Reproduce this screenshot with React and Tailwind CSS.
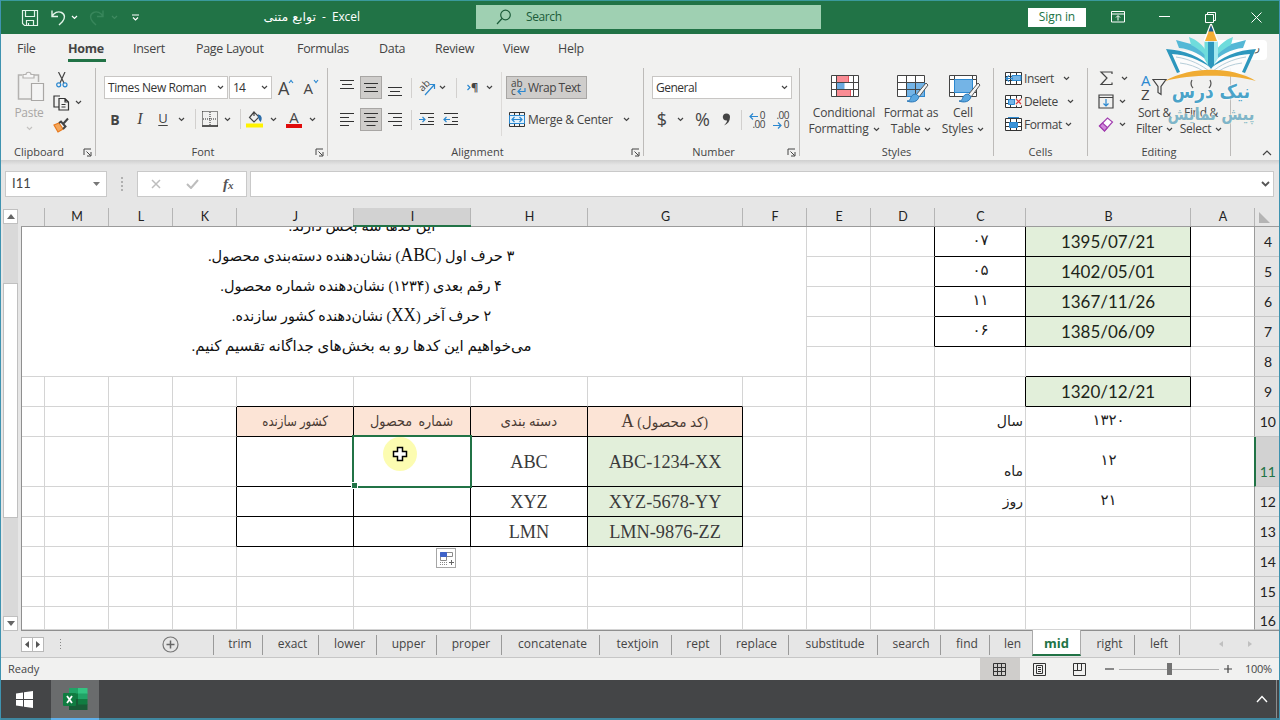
import React from 'react'
import clsx from 'clsx'

const menuTabs = [
  { name: 'File', cls: 'w-[51px]' },
  { name: 'Home', cls: 'w-[65px]' },
  { name: 'Insert', cls: 'w-[63px]' },
  { name: 'Page Layout', cls: 'w-[101px]' },
  { name: 'Formulas', cls: 'w-[82px]' },
  { name: 'Data', cls: 'w-[56px]' },
  { name: 'Review', cls: 'w-[68px]' },
  { name: 'View', cls: 'w-[55px]' },
  { name: 'Help', cls: 'w-[60px]' },
]

const columns = ['', 'M', 'L', 'K', 'J', 'I', 'H', 'G', 'F', 'E', 'D', 'C', 'B', 'A']
const rows = [4, 5, 6, 7, 8, 9, 10, 11, 12, 13, 14, 15, 16]

const GRID_COLS = 'grid-cols-[23px_64px_64px_64px_117px_117px_117px_155px_64px_64px_64px_91px_165px_64px_24px]'
const GRID_ROWS = 'grid-rows-[30px_30px_30px_30px_30px_30px_30px_50px_30px_30px_30px_30px_23px]'

const cells = {
  B4: '1395/07/21', B5: '1402/05/01', B6: '1367/11/26', B7: '1385/06/09', B9: '1320/12/21',
  B10: '۱۳۲۰', B11: '۱۲', B12: '۲۱',
  C4: '۰۷', C5: '۰۵', C6: '۱۱', C7: '۰۶', C10: 'سال', C11: 'ماه', C12: 'روز',
  H10: 'دسته بندی', I10: 'شماره  محصول', J10: 'کشور سازنده',
  G11: 'ABC-1234-XX', G12: 'XYZ-5678-YY', G13: 'LMN-9876-ZZ',
  H11: 'ABC', H12: 'XYZ', H13: 'LMN',
}

// the table headings are condensed a little, each by its own amount
const headingScale = { J: 'scale-x-[0.84]', I: 'scale-x-[0.91]', H: 'scale-x-[0.95]' }

const sheets = [
  { name: 'trim', cls: 'w-[49px]' },
  { name: 'exact', cls: 'w-[56px]' },
  { name: 'lower', cls: 'w-[58px]' },
  { name: 'upper', cls: 'w-[60px]' },
  { name: 'proper', cls: 'w-[65px]' },
  { name: 'concatenate', cls: 'w-[98px]' },
  { name: 'textjoin', cls: 'w-[72px]' },
  { name: 'rept', cls: 'w-[49px]' },
  { name: 'replace', cls: 'w-[68px]' },
  { name: 'substitude', cls: 'w-[89px]' },
  { name: 'search', cls: 'w-[63px]' },
  { name: 'find', cls: 'w-[49px]' },
  { name: 'len', cls: 'w-[42px]' },
  { name: 'mid', cls: 'w-[49px]' },
  { name: 'right', cls: 'w-[54px]' },
  { name: 'left', cls: 'w-[45px]' },
]

const isBoxed = (col, row) => {
  if (['J', 'I', 'H', 'G'].includes(col)) return row >= 10 && row <= 13
  if (col === 'B') return (row >= 4 && row <= 7) || row === 9
  if (col === 'C') return row >= 4 && row <= 7
  return false
}

const Svg = ({ w = 16, h = 16, className, children }) => (
  <svg width={w} height={h} viewBox={`0 0 ${w} ${h}`} fill="none" stroke="#444" strokeWidth="1.2" className={clsx('block shrink-0', className)}>
    {children}
  </svg>
)

const Chevron = ({ className, color = '#444' }) => (
  <Svg w={7} h={5} className={className}>
    <path d="M1 1l2.5 2.5L6 1" stroke={color} strokeWidth="1.2" />
  </Svg>
)

const Box = ({ className, children }) => (
  <div className={clsx('flex shrink-0 items-center justify-center', className)}>{children}</div>
)

const Sep = () => <div className="h-[20px] w-px bg-[#d2d0ce]" />

const Launcher = () => (
  <Svg w={9} h={9}>
    <path d="M1 7V1h7" strokeWidth="1" />
    <path d="M3.5 3.5l4 4M8 4v4H4" strokeWidth="1" />
  </Svg>
)

const Group = ({ label, launcher, className, labelClass, children }) => (
  <div className={clsx('flex h-[94px] shrink-0 flex-col', className)}>
    <div className="flex h-[78px]">{children}</div>
    <div className="relative flex h-[16px] items-center justify-center text-[11px] text-[#444]">
      <span className={labelClass}>{label}</span>
      {launcher && <div className="absolute right-[3px] top-[4px]"><Launcher /></div>}
    </div>
  </div>
)

const GroupLine = () => <div className="mt-[2px] h-[88px] w-px shrink-0 bg-[#bdbbb9]" />

const Lines = ({ d }) => (
  <Svg w={16} h={16}><path d={d} strokeWidth="1.2" stroke="#333" /></Svg>
)

const TitleBar = () => (
  <div className="flex h-[34px] shrink-0 items-center bg-[#217346] text-[12px] text-white">
    <div className="flex w-[240px] items-center pl-[20px]">
      <Svg w={18} h={18} className="mt-px">
        <path d="M1.5 1.5h15v15h-13l-2-2z M4.5 1.5v6h9v-6 M5.5 16.5v-5h7v5 M7.5 14v2" stroke="#e4f5ea" />
      </Svg>
      <Svg w={17} h={17} className="ml-[11px]">
        <path d="M2 1.5v6h6 M2 7.5C4 3.5 8 2 11.500 3.500c4 2 3.500 6 1 9L9 16" stroke="#e4f5ea" strokeWidth="1.4" />
      </Svg>
      <Chevron className="ml-[4px]" color="#fff" />
      <Svg w={17} h={17} className="ml-[10px] opacity-50">
        <path d="M15 1.5v6H9 M15 7.5C13 3.5 9 2 5.500 3.500c-4 2-3.500 6-1 9L8 16" stroke="#4f9a70" strokeWidth="1.4" />
      </Svg>
      <Chevron className="ml-[6px]" color="#3f8a60" />
      <Svg w={9} h={7} className="ml-[13px]">
        <path d="M1 1h7 M2 3.5l2.500 2.500L7 3.5" stroke="#fff" />
      </Svg>
    </div>
    <div className="flex w-[142px] items-center pl-[22px] whitespace-nowrap">
      <span dir="rtl" className="inline-block w-[53px] origin-right scale-x-[1.05] font-['DejaVu_Sans'] text-[12px]">توابع متنی</span>
      <span className="ml-[6px]">-</span>
      <span className="ml-[6px] tracking-[-0.1px]">Excel</span>
    </div>
    <div className="ml-[93px] flex h-[24px] w-[345px] items-center bg-[#9fd0b2] pl-[20px] text-[#1c5c3a]">
      <Svg w={16} h={16}>
        <circle cx="9.5" cy="6" r="4.8" stroke="#1c5c3a" />
        <path d="M6 9.5L1 15" stroke="#1c5c3a" />
      </Svg>
      <span className="ml-[14px] tracking-[-0.4px]">Search</span>
    </div>
    <div className="ml-[207px] flex h-[19px] w-[58px] items-center justify-center bg-white tracking-[-0.1px] text-[#217346]">Sign in</div>
    <Svg w={14} h={12} className="ml-[25px]">
      <path d="M.5 .5h13v10.500H.5z M.5 3h13 M7 9.5V5 M5 6.5l2-2 2 2" stroke="#fff" strokeWidth="1" />
    </Svg>
    <Svg w={11} h={2} className="ml-[34px]"><path d="M0 .5h11" stroke="#fff" strokeWidth="1" /></Svg>
    <Svg w={11} h={11} className="ml-[35px]">
      <path d="M.5 2.500h8v8h-8z M2.500 2.500V.5h8v8h-2" stroke="#fff" strokeWidth="1" />
    </Svg>
    <Svg w={11} h={11} className="ml-[35px]"><path d="M.5 .5l10 10M10.5 .5l-10 10" stroke="#fff" strokeWidth="1" /></Svg>
  </div>
)

const MenuBar = () => (
  <div className="flex h-[32px] shrink-0 items-center bg-[#f1f1f0] pl-[16px] text-[12.5px] text-[#444]">
    {menuTabs.map((t) => (
      <div key={t.name} className={clsx('flex h-[30px] shrink-0', t.cls)}>
        <span
          className={clsx(
            'inline-block h-[27px] whitespace-nowrap pt-[5px]',
            t.name === 'Home' ? 'w-[38px] border-b-[3px] border-[#217346] font-bold tracking-[-0.3px]' : 'tracking-[-0.3px]'
          )}
        >
          {t.name}
        </span>
      </div>
    ))}
    <div className="ml-[595px] h-[20px] w-[54px] rounded-sm bg-white pr-[7px] text-right text-[10px]">ر</div>
  </div>
)

const Clipboard = () => (
  <Group label="Clipboard" launcher className="w-[94px]" labelClass="mr-[18px]">
    <div className="flex w-[52px] flex-col items-center pl-[4px] pt-[5px] text-[#a9a7a5]">
      <Svg w={28} h={31} className="ml-[3px]">
        <path d="M5 4H1.500v24H14 M17 4h4.500v7" stroke="#b4b2b0" strokeWidth="1.5" />
        <path d="M6 7V3.500h3C9 .5 14 .5 14 3.500h3V7z" stroke="#b4b2b0" fill="#f6f6f6" />
        <path d="M14.5 12.500h12v17h-12z" stroke="#a9a7a5" fill="#f4f4f4" />
      </Svg>
      <span className="mt-[2px] text-[12px] leading-[18px] tracking-[-0.3px]">Paste</span>
      <Chevron className="mt-[4px]" color="#c4c2c0" />
    </div>
    <div className="flex flex-col pl-[2px] pt-[6px]">
      <Svg w={12} h={16} className="ml-px">
        <path d="M2.500 0L8 11 M9 0L4 11" />
        <circle cx="2.7" cy="12.8" r="2" stroke="#2b88d0" />
        <circle cx="9" cy="12.8" r="2" stroke="#2b88d0" />
      </Svg>
      <div className="mt-[6px] flex items-center">
        <Svg w={17} h={17} className="-ml-[2px]">
          <path d="M6 13H1V2h6" stroke="#333" />
          <path d="M6 4.500h6l3.500 3.500v8H6z M12 4.500V8h3.500 M8.500 10.500h4 M8.500 13h4" stroke="#333" />
        </Svg>
        <Chevron className="ml-[5px]" />
      </div>
      <Svg w={17} h={17} className="-ml-[2px] mt-[6px]">
        <path d="M1 8l5-2 4 6-5 3z" fill="#f4a75c" stroke="#e8791c" />
        <path d="M6 6l2-1.500 4.500 5L10 12 M10.500 6.500L15 1.500" stroke="#444" strokeWidth="2" />
      </Svg>
    </div>
  </Group>
)

const FontGroup = () => (
  <Group label="Font" launcher className="w-[231px]" labelClass="mr-[17px]">
    <div className="flex flex-col pl-[8px] pt-[10px]">
      <div className="flex h-[23px] items-center">
        <div className="flex h-[23px] w-[124px] items-center justify-between border border-[#c8c6c4] bg-white px-[3px]">
          <span className="whitespace-nowrap text-[12px] tracking-[-0.4px] text-[#333]">Times New Roman</span>
          <Chevron />
        </div>
        <div className="ml-px flex h-[23px] w-[43px] items-center justify-between border border-[#c8c6c4] bg-white px-[3px]">
          <span className="text-[12px] tracking-[-0.8px] text-[#333]">14</span>
          <Chevron />
        </div>
        <div className="ml-[6px] flex items-start">
          <span className="text-[18px] leading-[16px] tracking-[-1px]">A</span>
          <Svg w={6} h={5} className="-mt-px"><path d="M1 4l2-2.500L5 4" stroke="#2b88d0" /></Svg>
        </div>
        <div className="ml-[9px] flex items-start">
          <span className="text-[15px] leading-[18px]">A</span>
          <Svg w={6} h={5}><path d="M1 1l2 2.500L5 1" stroke="#2b88d0" /></Svg>
        </div>
      </div>
      <div className="-ml-[2px] mt-[9px] flex h-[22px] items-center">
        <Box className="w-[26px] text-[14px] font-bold">B</Box>
        <Box className="w-[24px] font-['Liberation_Serif'] text-[16px] italic">I</Box>
        <Box className="w-[22px] text-[13px] underline underline-offset-2">U</Box>
        <Box className="w-[14px]"><Chevron /></Box>
        <Box className="w-[14px]"><Sep /></Box>
        <Box className="w-[16px]">
          <Svg w={16} h={16}>
            <path d="M.5 .5h15v14 M.5 .5v14 M8 1v14 M1 8h14" strokeDasharray="1 1" stroke="#222" strokeWidth="1" />
            <path d="M0 15h16" stroke="#222" strokeWidth="1.5" />
          </Svg>
        </Box>
        <Box className="w-[18px]"><Chevron /></Box>
        <Box className="w-[8px]"><Sep /></Box>
        <Box className="w-[22px]">
          <Svg w={18} h={18}>
            <path d="M8 2L3.500 7.500 8 12l5-5z M8 2V6" />
            <path d="M12.500 5c3 .5 3 4 2 6-1.500-1-1.500-3-2-6z" fill="#2b6ca8" stroke="#2b6ca8" />
            <path d="M0 15.500h17" stroke="#fff200" strokeWidth="4" />
          </Svg>
        </Box>
        <Box className="w-[14px]"><Chevron /></Box>
        <div className="flex w-[28px] flex-col items-center">
          <span className="text-[15px] leading-[14px]">A</span>
          <div className="h-[4px] w-[16px] bg-[#e00b0b]" />
        </div>
        <Box className="w-[8px]"><Chevron /></Box>
      </div>
    </div>
  </Group>
)

const Alignment = () => (
  <Group label="Alignment" launcher className="w-[315px]" labelClass="mr-[16px]">
    <div className="flex w-[173px] flex-col pl-[8px] pt-[10px]">
      <div className="flex h-[23px] items-center">
        <Box className="w-[22px]"><Lines d="M1 .5h14M3 4.500h10M1 8.500h14" /></Box>
        <Box className="ml-[2px] h-[23px] w-[22px] border border-[#a8a6a4] bg-[#cfcdcb]"><Lines d="M1 3.500h14M3 7.500h10M1 11.500h14" /></Box>
        <Box className="ml-[2px] w-[22px]"><Lines d="M1 7.500h14M3 11.500h10M1 15.500h14" /></Box>
        <Box className="w-[10px]"><Sep /></Box>
        <Box className="ml-px w-[20px]">
          <div className="relative h-[16px] w-[17px]">
            <span className="absolute -left-[1px] -top-[2px] -rotate-45 text-[10px] leading-[14px]">ab</span>
            <Svg w={17} h={16} className="absolute left-0 top-0"><path d="M6 15L15 5 M11 4.500h4.500V9" stroke="#2b88d0" /></Svg>
          </div>
        </Box>
        <Box className="w-[10px]"><Chevron /></Box>
        <Box className="w-[18px]"><Sep /></Box>
        <Box className="w-[15px] text-[11px]">
          <Svg w={4} h={7}><path d="M.5 1l2.500 2.500L.5 6" stroke="#2b88d0" /></Svg>
          <span className="font-bold">¶</span>
        </Box>
        <Box className="w-[19px]"><Chevron /></Box>
      </div>
      <div className="mt-[9px] flex h-[23px] items-center">
        <Box className="w-[22px]"><Lines d="M1 1.500h14M1 5.500h9M1 9.500h14M1 13.500h9" /></Box>
        <Box className="ml-[2px] h-[23px] w-[22px] border border-[#a8a6a4] bg-[#cfcdcb]"><Lines d="M1 1.500h14M3.500 5.500h9M1 9.500h14M3.500 13.500h9" /></Box>
        <Box className="ml-[2px] w-[22px]"><Lines d="M1 1.500h14M6 5.500h9M1 9.500h14M6 13.500h9" /></Box>
        <Box className="w-[10px]"><Sep /></Box>
        <Box className="ml-px w-[20px]">
          <Svg><path d="M1 1.500h14M9 5.500h6M9 9.500h6M1 12.500h14" stroke="#333" /><path d="M0 7.500h6M3.500 5L6 7.500 3.500 10" stroke="#2b88d0" /></Svg>
        </Box>
        <Box className="ml-[4px] w-[20px]">
          <Svg><path d="M1 1.500h14M9 5.500h6M9 9.500h6M1 12.500h14" stroke="#333" /><path d="M1 7.500h6M3.500 5L1 7.500 3.500 10" stroke="#2b88d0" /></Svg>
        </Box>
      </div>
    </div>
    <div className="mt-[6px] h-[64px] w-px bg-[#dcdad8]" />
    <div className="flex flex-col pl-[4px] pt-[10px]">
      <div className="flex h-[23px] w-[81px] items-center border border-[#a8a6a4] bg-[#cfcdcb] pl-[4px]">
        <div className="relative flex h-[17px] w-[15px] flex-col text-[10px] leading-[8px]">
          <div>ab</div>
          <div>c</div>
          <Svg w={9} h={9} className="absolute bottom-0 right-0"><path d="M8 1v3.500H1.500M4 1.500l-3 3 3 3" stroke="#2b88d0" /></Svg>
        </div>
        <span className="ml-[2px] whitespace-nowrap text-[12px] tracking-[-0.5px]">Wrap Text</span>
      </div>
      <div className="mt-[9px] flex h-[23px] items-center pl-[3px]">
        <Svg w={16} h={16}>
          <path d="M.5 .5h15v14H.5z M5.500 .5v3 M10.500 .5v3 M5.500 12v3 M10.500 12v3" stroke="#333" strokeWidth="1" />
          <path d="M.5 3.500h15v8H.5z" stroke="#2b88d0" fill="#e3f1fb" strokeWidth="1" />
          <path d="M3 7.500h10M5.500 5L3 7.500 5.500 10M10.500 5L13 7.500 10.500 10" stroke="#2b88d0" />
        </Svg>
        <span className="ml-[3px] w-[86px] whitespace-nowrap text-[12px] tracking-[-0.25px]">Merge &amp; Center</span>
        <Chevron className="ml-[9px]" />
      </div>
    </div>
  </Group>
)

const NumberGroup = () => (
  <Group label="Number" launcher className="w-[155px]" labelClass="mr-[16px]">
    <div className="flex flex-col pl-[8px] pt-[10px]">
      <div className="flex h-[23px] w-[140px] items-center justify-between border border-[#c8c6c4] bg-white px-[3px]">
        <span className="text-[12px] tracking-[-0.5px] text-[#333]">General</span>
        <Chevron />
      </div>
      <div className="mt-[9px] flex h-[23px] items-center">
        <Box className="w-[20px] text-[18px]">$</Box>
        <Box className="w-[17px]"><Chevron /></Box>
        <Box className="w-[27px] text-[18px]">%</Box>
        <Box className="w-[21px]">
          <Svg w={9} h={13}><path d="M4.500 .5a3.500 3.500 0 013.500 3.500c0 4-2 7-6 8.500 2-2 3-3.500 3-5C-.5 8-.5 .5 4.500 .5z" fill="#444" stroke="none" /></Svg>
        </Box>
        <Box className="w-[8px]"><Sep /></Box>
        <div className="relative ml-[2px] h-[18px] w-[18px] text-right text-[10px] leading-[9px] tracking-[-0.5px]">
          <div>0</div><div>.00</div>
          <Svg w={9} h={7} className="absolute left-[2px] top-[2px]"><path d="M9 3.500H1M4 .5l-3 3 3 3" stroke="#2b88d0" /></Svg>
        </div>
        <div className="relative ml-[6px] h-[18px] w-[18px] text-right text-[10px] leading-[9px] tracking-[-0.5px]">
          <div>.00</div><div>0</div>
          <Svg w={9} h={7} className="absolute bottom-0 left-[2px]"><path d="M0 3.500h8M5 .5l3 3-3 3" stroke="#2b88d0" /></Svg>
        </div>
      </div>
    </div>
  </Group>
)

const Brush = () => (
  <g>
    <path d="M29 8L19 20l3 2L31 10z" fill="#f4f4f4" stroke="#555" strokeWidth="1" />
    <path d="M19 19c-3 0-5 2-5.500 4.500-.5 2-2 2.500-3.500 2.500 5 2 11 1 12-4.500z" fill="#5aa7e0" stroke="#2b78b8" strokeWidth="1" />
  </g>
)

const BigButton = ({ icon, top, bottom, className }) => (
  <div className={clsx('flex shrink-0 flex-col items-center pt-[9px] text-[12px] leading-[16px] tracking-[-0.15px]', className)}>
    <div className="h-[30px]">{icon}</div>
    <span className="whitespace-nowrap">{top}</span>
    <span className="flex items-center gap-[4px] whitespace-nowrap">{bottom}<Chevron /></span>
  </div>
)

const Styles = () => (
  <Group label="Styles" className="w-[193px]">
    <BigButton
      className="ml-[9px] w-[70px]"
      top="Conditional"
      bottom="Formatting"
      icon={
        <Svg w={28} h={23} className="ml-[2px]">
          <path d="M.5 .5h27v21H.5z" fill="#fff" stroke="none" />
          <path d="M5.500 .5h12v7h-12z M5.500 14.500h14v7h-14z" fill="#f98c94" stroke="#e2515c" strokeWidth="1" />
          <path d="M5.500 7.500h8v7h-8z" fill="#6aa9de" stroke="none" />
          <path d="M.5 .5h27v21H.5z M.5 7.500h27 M.5 14.500h27 M5.500 .5v21 M22.500 .5v21" stroke="#444" strokeWidth="1" />
        </Svg>
      }
    />
    <BigButton
      className="ml-[4px] w-[56px]"
      top="Format as"
      bottom="Table"
      icon={
        <Svg w={32} h={28} className="ml-[3px]">
          <path d="M.5 .5h27v21H.5z" fill="#fff" stroke="#444" strokeWidth="1" />
          <path d="M9.500 7.500h18v14h-18z" fill="#74b4e6" stroke="#2b88d0" strokeWidth="1" />
          <path d="M.5 7.500h27 M.5 14.500h27 M9.500 .5v21 M18.500 .5v21" stroke="#444" strokeWidth="1" />
          <Brush />
        </Svg>
      }
    />
    <BigButton
      className="ml-[2px] w-[44px]"
      top="Cell"
      bottom="Styles"
      icon={
        <Svg w={32} h={28} className="ml-[3px]">
          <path d="M.5 .5h27v21H.5z M.5 4.500h27 M.5 17.500h27 M5.500 .5v21 M23.500 .5v4" fill="#fff" stroke="#444" strokeWidth="1" />
          <path d="M5.500 4.500h18v13h-18z" fill="#74b4e6" stroke="#2b88d0" strokeWidth="1" />
          <Brush />
        </Svg>
      }
    />
  </Group>
)

const CellIcon = ({ kind }) => (
  <Svg w={17} h={15}>
    <path d="M.5 1.500h16v12H.5z M.5 5.500h16 M.5 9.500h16 M5.500 1.500v12 M11.500 1.500v12" stroke="#333" strokeWidth="1" fill="#fff" />
    {kind === 'insert' && <><path d="M7 4.500h9v5H7z" fill="#74b4e6" stroke="#2b88d0" strokeWidth="1" /><path d="M8 7.500H1M4 4.500l-3 3 3 3" stroke="#2b88d0" /></>}
    {kind === 'delete' && <><path d="M3.500 5.500h6v5h-6z" fill="#74b4e6" stroke="#2b88d0" strokeWidth="1" /><path d="M10 4.500h7v7h-7z" fill="#f1f1f0" stroke="none" /><path d="M11 5l5 5M16 5l-5 5" stroke="#e03a3a" /></>}
    {kind === 'format' && <><path d="M4.500 5.500h8v5h-8z" fill="#3b93d8" stroke="#2b88d0" strokeWidth="1" /><path d="M3 .5h11" stroke="#2b88d0" /></>}
  </Svg>
)

const Cells = () => (
  <Group label="Cells" className="w-[93px]">
    <div className="flex flex-col pl-[11px] pt-px text-[12px] tracking-[-0.4px]">
      <div className="flex h-[23px] items-center">
        <CellIcon kind="insert" /><span className="ml-[2px] w-[30px]">Insert</span><Chevron className="ml-[9px]" />
      </div>
      <div className="flex h-[23px] items-center">
        <CellIcon kind="delete" /><span className="ml-[2px] w-[34px]">Delete</span><Chevron className="ml-[9px]" />
      </div>
      <div className="flex h-[23px] items-center">
        <CellIcon kind="format" /><span className="ml-[2px] w-[39px]">Format</span><Chevron className="ml-[2px]" />
      </div>
    </div>
  </Group>
)

const Editing = () => (
  <Group label="Editing" className="w-[142px]">
    <div className="flex w-[42px] flex-col pl-[10px] pt-px">
      <div className="flex h-[23px] items-center">
        <Svg w={16} h={15}><path d="M14 3V1H3l6 6-6 6.500h11v-2" /></Svg><Chevron className="ml-[7px]" />
      </div>
      <div className="flex h-[23px] items-center">
        <Svg w={16} h={15}><path d="M1 1h14v13H1z M1 3.500h14" /><path d="M8 5v7M5.500 9.500L8 12l2.500-2.500" stroke="#2b88d0" /></Svg><Chevron className="ml-[5px]" />
      </div>
      <div className="flex h-[23px] items-center">
        <Svg w={16} h={15}><path d="M1.500 9l8-8 5 4-8 9z" stroke="#a23fb0" fill="#fff" /><path d="M1.500 9l3-3 5 4.500-3 3.500z" fill="#d08adb" stroke="#a23fb0" /></Svg><Chevron className="ml-[5px]" />
      </div>
    </div>
    <div className="flex w-[46px] flex-col pl-[8px] pt-[7px] text-[12px] leading-[16px] tracking-[-0.3px]">
      <div className="flex h-[32px] pl-[3px]">
        <div className="w-[11px] text-[15px] leading-[14px]"><div className="text-[#2b88d0]">A</div><div>Z</div></div>
        <Svg w={15} h={18} className="mt-[5px]"><path d="M1 1.500h13L9 8.500v8l-3-2v-6z" /></Svg>
      </div>
      <span className="whitespace-nowrap">Sort &amp;</span>
      <span className="-ml-[2px] flex items-center gap-[4px]">Filter<Chevron /></span>
    </div>
    <div className="flex w-[50px] flex-col items-center pt-[7px] text-[12px] leading-[16px] tracking-[-0.3px]">
      <div className="h-[32px]">
        <Svg w={24} h={26}><path d="M3 7c-1.500 3-1 6 1 8M21 7c1.500 3 1 6-1 8" stroke="#555" /></Svg>
      </div>
      <span className="whitespace-nowrap">Find &amp;</span>
      <span className="flex items-center gap-[4px]">Select<Chevron /></span>
    </div>
  </Group>
)

const Ribbon = () => (
  <div className="flex h-[94px] shrink-0 bg-[#f1f1f0] text-[#444]">
    <Clipboard /><GroupLine />
    <FontGroup /><GroupLine />
    <Alignment /><GroupLine />
    <NumberGroup /><GroupLine />
    <Styles /><GroupLine />
    <Cells /><GroupLine />
    <Editing /><GroupLine />
    <div className="flex flex-1 items-end justify-end pb-[4px] pr-[7px]">
      <Svg w={10} h={6}><path d="M1 5l4-4 4 4" /></Svg>
    </div>
  </div>
)

const FormulaBar = () => (
  <div className="h-[48px] shrink-0 bg-[#e6e6e6]">
    <div className="h-[5px] bg-gradient-to-b from-[#cfcfcf] to-[#e6e6e6]" />
    <div className="mt-[6px] flex h-[26px] items-center pl-[4px]">
      <div className="flex h-[26px] w-[102px] items-center justify-between border border-[#c9c9c9] bg-white pl-[6px] pr-[6px] font-[Lato] text-[13px] text-[#444]">
        I11
        <Svg w={7} h={4}><path d="M0 0h7L3.500 4z" fill="#777" stroke="none" /></Svg>
      </div>
      <div className="ml-[14px] flex w-[2px] flex-col gap-[2px]">
        {[1, 2, 3, 4].map((i) => <div key={i} className="size-[2px] bg-[#b0b0b0]" />)}
      </div>
      <div className="ml-[14px] flex h-[26px] w-[110px] items-center border border-[#c9c9c9] bg-white pl-[13px]">
        <Svg w={10} h={10}><path d="M1 1l8 8M9 1L1 9" stroke="#bdbdbd" strokeWidth="1.5" /></Svg>
        <Svg w={13} h={10} className="ml-[25px]"><path d="M1 5l4 4 7-8" stroke="#bdbdbd" strokeWidth="2" /></Svg>
        <span className="ml-[24px] font-['Liberation_Serif'] text-[15px] font-bold italic leading-none text-[#555]">f<span className="text-[11px]">x</span></span>
      </div>
      <div className="ml-[3px] flex h-[26px] w-[1024px] items-center justify-end border border-[#c9c9c9] bg-white pr-[3px]">
        <Svg w={9} h={6}><path d="M1 1l3.500 3.500L8 1" stroke="#555" strokeWidth="1.8" /></Svg>
      </div>
    </div>
  </div>
)

const ColumnHeaders = () => (
  <div className={clsx('grid h-[19px] grid-rows-[18px] border-b border-[#9b9b9b] pl-px', GRID_COLS)}>
    {columns.map((c) => (
      <div
        key={c}
        className={clsx(
          'relative flex items-center justify-center border-r border-[#b5b5b5] pl-px pt-px font-[Lato] text-[12.5px] leading-none text-[#222]',
          c === 'I' && 'bg-[#d2d2d2]'
        )}
      >
        {c}
        {c === 'I' && <div className="absolute -bottom-px -left-px -right-px h-[2px] bg-[#217346]" />}
      </div>
    ))}
    <div className="flex items-end pb-[3px] pl-[4px]">
      <Svg w={11} h={11}><path d="M0 0v11h11z" fill="#b4b4b4" stroke="none" /></Svg>
    </div>
  </div>
)

const Selection = () => (
  <>
    <div className="absolute -bottom-[2px] -left-[2px] -right-[2px] -top-[2px] z-10 border-2 border-[#217346]">
      <div className="absolute -bottom-[3px] -left-[3px] size-[7px] border border-white bg-[#217346]" />
    </div>
    <div className="absolute left-[29px] top-0 z-20 flex size-[34px] items-center justify-center rounded-full bg-[#fbfb9e]/80">
      <Svg w={16} h={16}>
        <path d="M5.500 1.500h5v4h4v5h-4v4h-5v-4h-4v-5h4z" fill="#fff" stroke="#000" strokeWidth="1.5" />
      </Svg>
    </div>
  </>
)

const PasteOptions = () => (
  <div className="absolute left-[82px] top-px z-10 flex size-[20px] items-center justify-center border border-[#a6a6a6] bg-white">
    <Svg w={15} h={15}>
      <path d="M1.500 1.500h12v4h-12z M1.500 5.500h6v4h-6z" stroke="#8a8a8a" strokeWidth="1" />
      <path d="M1.500 1.500h6v4h-6z" fill="#3f63c8" stroke="#3f63c8" strokeWidth="1" />
      <path d="M1 11.500h8M1 13.500h8" stroke="#8a8a8a" strokeWidth="1" strokeDasharray="1 1" />
      <path d="M10 11.500h5M12.500 9v5" stroke="#666" strokeWidth="1" />
    </Svg>
  </div>
)

const cellText = (col, row) => {
  if (col === 'G' && row === 10) {
    return (
      <span dir="rtl" className="scale-x-[0.97] font-['Liberation_Serif','DejaVu_Sans'] text-[14px] leading-[20px] text-[#4a3b33]">
        (کد محصول) <span className="text-[18px]">A</span>
      </span>
    )
  }
  const text = cells[col + row]
  if (!text) return null
  if (col === 'B' && row <= 9) return <span className="mt-px font-[Lato] text-[17px] text-[#1c2418]">{text}</span>
  if (col === 'B' || (col === 'C' && row <= 7)) return <span className="mb-[2px] ml-px font-['DejaVu_Sans'] text-[15px] text-[#222]">{text}</span>
  if (col === 'C') return <span dir="rtl" className="font-['DejaVu_Sans'] text-[14px] text-[#222]">{text}</span>
  if (row === 10) {
    return (
      <span dir="rtl" className={clsx("whitespace-pre font-['Liberation_Serif','DejaVu_Sans'] text-[14px] text-[#4a3b33]", headingScale[col])}>
        {text}
      </span>
    )
  }
  return <span className="mt-[2px] font-['Liberation_Serif'] text-[18.3px] leading-none text-[#3a3a3a]">{text}</span>
}

const Cell = ({ ci, ri }) => {
  const col = columns[ci]
  const row = rows[ri]
  const boxed = isBoxed(col, row)
  const rightBlack = boxed || isBoxed(columns[ci + 1], row)
  const bottomBlack = boxed || isBoxed(col, rows[ri + 1])
  return (
    <div
      className={clsx(
        'relative flex border-b border-r whitespace-nowrap',
        col === 'C' && row >= 10 ? 'justify-end pr-[2px]' : 'justify-center',
        col === 'C' && row === 11 ? 'items-end pb-[4px]' : 'items-center',
        rightBlack ? 'border-r-black' : 'border-r-[#d4d4d4]',
        bottomBlack ? 'border-b-black' : 'border-b-[#d4d4d4]',
        boxed && row === 10 && 'bg-[#fce4d6]',
        boxed && (col === 'B' || (col === 'G' && row > 10)) && 'bg-[#e2efda]'
      )}
      style={{ gridColumn: ci + 1, gridRow: ri + 1 }}
    >
      {cellText(col, row)}
      {col === 'I' && row === 11 && <Selection />}
      {col === 'I' && row === 14 && <PasteOptions />}
    </div>
  )
}

const Description = () => (
  <div className="z-10 col-start-1 col-end-10 row-start-1 row-end-6 overflow-hidden border-b border-r border-[#d4d4d4] bg-white">
    <div dir="rtl" className="-mt-[16px] flex w-[679px] flex-col items-center whitespace-nowrap font-['Liberation_Serif','DejaVu_Sans'] text-[15px] leading-[30px] text-[#111]">
      <p className="h-[30px] scale-x-[0.98]">این کدها سه بخش دارند.</p>
      <p className="h-[30px] scale-x-[0.975]">۳ حرف اول (<span className="text-[18px] leading-none">ABC</span>) نشان‌دهنده دسته‌بندی محصول.</p>
      <p className="h-[30px] scale-x-[0.97]">۴ رقم بعدی (۱۲۳۴) نشان‌دهنده شماره محصول.</p>
      <p className="h-[30px] scale-x-[0.95]">۲ حرف آخر (<span className="text-[18px] leading-none">XX</span>) نشان‌دهنده کشور سازنده.</p>
      <p className="h-[30px]">می‌خواهیم این کدها رو به بخش‌های جداگانه تقسیم کنیم.</p>
    </div>
  </div>
)

const Sheet = () => (
  <div className={clsx('grid h-[404px] overflow-hidden border-b border-l border-[#8f8f8f] bg-white', GRID_COLS, GRID_ROWS)}>
    <Description />
    {rows.map((row, ri) => (
      <React.Fragment key={row}>
        {columns.map((col, ci) => (ri < 5 && ci < 9 ? null : <Cell key={ci} ci={ci} ri={ri} />))}
        <div
          className={clsx(
            'relative -ml-px flex justify-end border-b border-l border-b-[#c6c6c6] font-[Lato] text-[14px] leading-[18px]',
            row === 16 ? 'items-start pt-[5px]' : row === 11 ? 'items-end pb-[5px]' : 'items-center',
            row === 11 ? 'border-l-2 border-l-[#217346] bg-[#d2d2d2] text-[#217346]' : 'border-l-[#9b9b9b] bg-[#e6e6e6] text-[#222]',
            row < 10 ? 'pr-[7px]' : 'pr-[3px]'
          )}
          style={{ gridColumn: 15, gridRow: ri + 1 }}
        >
          {row}
        </div>
      </React.Fragment>
    ))}
  </div>
)

const ScrollBar = () => (
  <div className="flex w-[20px] shrink-0 flex-col bg-[#e6e6e6] pl-[2px] pt-px">
    <Box className="h-[15px] w-[15px] border border-[#c0c0c0] bg-white">
      <Svg w={8} h={5}><path d="M0 5h8L4 0z" fill="#666" stroke="none" /></Svg>
    </Box>
    <div className="h-[59px] w-[15px] bg-[#d9d9d9]" />
    <div className="h-[235px] w-[15px] border border-[#c0c0c0] bg-white" />
    <div className="h-[98px] w-[15px] bg-[#d9d9d9]" />
    <Box className="h-[15px] w-[15px] border border-[#c0c0c0] bg-white">
      <Svg w={8} h={5}><path d="M0 0h8L4 5z" fill="#666" stroke="none" /></Svg>
    </Box>
  </div>
)

const SheetTabs = () => (
  <div className="flex h-[27px] shrink-0 border-b border-[#c6c6c6] bg-[#e6e6e6] text-[12px] text-[#444]">
    <div className="flex w-[213px] shrink-0 items-center pl-[20px]">
      <Box className="h-[15px] w-[12px] border border-[#b8b8b8] bg-white"><Svg w={4} h={7}><path d="M4 0v7L0 3.500z" fill="#555" stroke="none" /></Svg></Box>
      <Box className="-ml-px h-[15px] w-[12px] border border-[#b8b8b8] bg-white"><Svg w={4} h={7}><path d="M0 0v7l4-3.500z" fill="#555" stroke="none" /></Svg></Box>
      <div className="ml-[16px] flex flex-col gap-[2px]">
        {[1, 2, 3, 4].map((i) => <div key={i} className="size-[1px] bg-[#888]" />)}
      </div>
      <Svg w={17} h={17} className="ml-[101px]"><circle cx="8.5" cy="8.5" r="7.5" stroke="#777" /><path d="M8.500 4.500v8M4.500 8.500h8" stroke="#666" strokeWidth="1.5" /></Svg>
    </div>
    <div className="-ml-px mt-[4px] h-[20px] w-px bg-[#9a9a9a]" />
    {sheets.map((s) => (
      <div
        key={s.name}
        className={clsx(
          'flex shrink-0 items-center justify-center',
          s.cls,
          s.name === 'mid' ? '-mt-px h-[26px] border-b-2 border-x border-b-[#217346] border-x-[#aaa] bg-white pt-[3px] text-[13px] font-bold text-[#217346]' : 'relative h-[25px] pl-[3px]'
        )}
      >
        <span>{s.name}</span>
        {s.name !== 'mid' && s.name !== 'len' && <div className="absolute right-0 top-[4px] h-[20px] w-px bg-[#9a9a9a]" />}
      </div>
    ))}
    <div className="flex flex-1 items-center justify-end gap-[25px] pr-[27px]">
      <Svg w={4} h={6}><path d="M4 0v6L0 3z" fill="#c0c0c0" stroke="none" /></Svg>
      <Svg w={4} h={6}><path d="M0 0v6l4-3z" fill="#c0c0c0" stroke="none" /></Svg>
    </div>
  </div>
)

const StatusBar = () => (
  <div className="flex h-[22px] shrink-0 items-center bg-[#f1f1f0] text-[11px] text-[#444]">
    <span className="w-[979px] pl-[7px]">Ready</span>
    <Box className="h-[22px] w-[40px] bg-[#cfcdcb]">
      <Svg w={13} h={13} className="-ml-px"><path d="M.5 .5h12v12H.5z M4.500 .5v12 M8.500 .5v12 M.5 4.500h12 M.5 8.500h12" stroke="#333" strokeWidth="1" /></Svg>
    </Box>
    <Box className="h-[22px] w-[40px]">
      <Svg w={13} h={13} className="-ml-px"><path d="M.5 .5h12v12H.5z M3.500 2.500h6v8h-6z M5 4.500h3 M5 6.500h3 M5 8.500h3" stroke="#333" strokeWidth="1" /></Svg>
    </Box>
    <Box className="h-[22px] w-[40px]">
      <Svg w={13} h={13} className="-ml-px"><path d="M.5 .5h12v12H.5z M.5 7.500h8v-7 M4.500 .5v7" stroke="#333" strokeWidth="1" /></Svg>
    </Box>
    <Svg w={9} h={2} className="ml-[5px]"><path d="M0 1h9" /></Svg>
    <div className="relative ml-[5px] flex h-[12px] w-[100px] items-center">
      <div className="h-px w-full bg-[#b0b0b0]" />
      <div className="absolute left-[48px] top-0 h-[12px] w-[5px] bg-[#737373]" />
    </div>
    <Svg w={8} h={8} className="ml-[5px]"><path d="M0 4h8M4 0v8" /></Svg>
    <span className="ml-[13px] whitespace-nowrap tracking-[-0.3px]">100%</span>
  </div>
)

const TaskBar = () => (
  <div className="flex h-[40px] shrink-0 border-b-2 border-[#3f87a0] bg-[#444547]">
    <Box className="w-[50px] pr-[4px]">
      <Svg w={17} h={17}><path d="M0 2.500l7-1v6.500H0z M8 1.300L17 0v8H8z M0 9h7v6.500l-7-1z M8 9h9v8l-9-1.300z" fill="#fff" stroke="none" /></Svg>
    </Box>
    <Box className="relative w-[48px] bg-[#6a6c6d]">
      <Svg w={25} h={22}>
        <path d="M6 0h9v6H6z" fill="#21a366" stroke="none" />
        <path d="M15 0h9.500v6H15z" fill="#33c481" stroke="none" />
        <path d="M6 5.500h9v6H6z" fill="#107c41" stroke="none" />
        <path d="M15 5.500h9.500v6H15z" fill="#21a366" stroke="none" />
        <path d="M6 11h9v11H6z" fill="#185c37" stroke="none" />
        <path d="M15 11h9.500v6H15z" fill="#107c41" stroke="none" />
        <path d="M15 16.500h9.500V22H15z" fill="#185c37" stroke="none" />
        <rect x="0" y="5" width="13" height="13" rx="1" fill="#107c41" stroke="none" />
        <path d="M4 8l5 7M9 8l-5 7" stroke="#fff" strokeWidth="1.8" />
      </Svg>
      <div className="absolute inset-x-0 -bottom-[2px] h-[2px] bg-[#60b0ea]" />
    </Box>
    <div className="flex flex-1 items-center justify-end pr-[8px]">
      <Svg w={12} h={8}><path d="M1 7l5-5.500L11 7" stroke="#fff" strokeWidth="1.4" /></Svg>
    </div>
    <div className="mr-[2px] w-px bg-[#8b8c8d]" />
  </div>
)

// channel logo floating over the top right corner
const Watermark = () => (
  <div className="absolute left-[1159px] top-[22px] z-30 flex w-[102px] flex-col items-center">
    <svg width="96" height="62" viewBox="0 0 96 62" className="block">
      <path d="M3 27l42 4 4-1 42-3-10 25-32 1-32-1z" fill="#fdfdfd" opacity=".9" />
      <path d="M13 18l26 7 9 18C40 33 28 27 16 26z" fill="#55b8d6" />
      <path d="M83 18l-26 7-9 18c8-10 20-16 32-17z" fill="#55b8d6" />
      <path d="M26 15c8 3 14 8 17 14l5 14C44 33 36 27 28 23z" fill="#6fdcdc" />
      <path d="M70 15c-8 3-14 8-17 14l-5 14c4-10 12-16 20-20z" fill="#6fdcdc" />
      <path d="M3 27c18 1 36 8 45 19-12-9-25-13-39-14l8 18-3 1z" fill="#2d97bd" />
      <path d="M93 27c-18 1-36 8-45 19 12-9 25-13 39-14l-8 18 3 1z" fill="#2d97bd" />
      <path d="M13 35c14 2 26 8 34 15M83 35c-14 2-26 8-34 15M17 41c9 1 17 4 23 8M79 41c-9 1-17 4-23 8" fill="none" stroke="#b5cdd8" strokeWidth="1" />
      <path d="M41.500 18h4v26l-4-7z" fill="#6fdcdc" />
      <path d="M45 18h6v25l-3 4-3-4z" fill="#2d97bd" />
      <path d="M51 18h4v18l-4 7z" fill="#a4eaf0" />
      <path d="M42 18.500L48 3l6 15.500z" fill="#f4ad35" stroke="#fff" strokeWidth="2.5" strokeLinejoin="round" />
      <path d="M42 19L48 3l6 16z" fill="#f4ad35" />
      <path d="M45.500 9.500L48 3l2.500 6.500z" fill="#1e5d93" />
      <path d="M2 59C28 44 68 44 93 59 68 52 28 52 2 59z" fill="#f0ac33" />
    </svg>
    <div dir="rtl" className="-mt-[6px] scale-x-[0.89] whitespace-nowrap font-['DejaVu_Sans'] text-[19px] font-bold leading-[26px] text-[#4ba3c8] [text-shadow:0_0_2px_#fff,0_0_3px_#fff]">نیک درس</div>
    <div dir="rtl" className="-mt-[2px] scale-x-[0.89] whitespace-nowrap font-['DejaVu_Sans'] text-[17px] font-bold leading-[24px] text-[#7fb5c9] [text-shadow:0_0_2px_#fff,0_0_2px_#f3e6c0]">پیش نمایش</div>
  </div>
)

const App = () => {
  return (
    <div className="relative flex h-[720px] w-[1280px] flex-col overflow-hidden border-x border-[#3f93b0] bg-[#e6e6e6] font-['Open_Sans',sans-serif]">
      <TitleBar />
      <MenuBar />
      <Ribbon />
      <FormulaBar />
      <div className="flex h-[423px] shrink-0">
        <ScrollBar />
        <div className="w-[1258px] shrink-0">
          <ColumnHeaders />
          <Sheet />
        </div>
      </div>
      <SheetTabs />
      <StatusBar />
      <TaskBar />
      <Watermark />
      <div className="absolute inset-x-0 top-0 h-px bg-[#3a9a9c]" />
    </div>
  )
}

export default App
